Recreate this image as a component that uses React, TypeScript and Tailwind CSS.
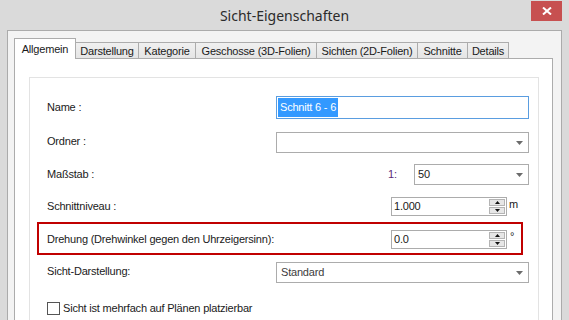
import React from 'react';

const tabs = [
  { label: 'Allgemein', w: 'w-[62px]' },
  { label: 'Darstellung', w: 'w-[64px]' },
  { label: 'Kategorie', w: 'w-[58px]' },
  { label: 'Geschosse (3D-Folien)', w: 'w-[122px]' },
  { label: 'Sichten (2D-Folien)', w: 'w-[102px]' },
  { label: 'Schnitte', w: 'w-[51px]' },
  { label: 'Details', w: 'w-[42px]' },
];

function ComboArrow() {
  return (
    <svg width="7" height="4" viewBox="0 0 7 4" className="shrink-0">
      <path d="M0 0h7L3.5 4z" fill="#6b6b6b" />
    </svg>
  );
}

function Combo({ value, width, textPad, textColor = 'text-[#1a1a1a]' }: { value: string; width: string; textPad: string; textColor?: string }) {
  return (
    <div className={`${width} h-[21px] border border-[#acacac] bg-white flex items-center pr-[5px] ${textPad}`}>
      <span className={`flex-1 ${textColor}`}>{value}</span>
      <ComboArrow />
    </div>
  );
}

function Spinner({ value }: { value: string }) {
  return (
    <div className="w-[116px] h-[19px] border border-[#acacac] bg-white flex shrink-0">
      <span className="flex-1 pl-[2px] leading-[17px]">{value}</span>
      <div className="flex flex-col gap-px p-px w-[18px]">
        <div className="h-[8px] border border-[#b4b4b4] bg-[#e6e6e6] flex items-center justify-center">
          <svg width="5" height="3" viewBox="0 0 5 3">
            <path d="M2.5 0L5 3H0z" fill="#111" />
          </svg>
        </div>
        <div className="h-[8px] border border-[#b4b4b4] bg-[#e6e6e6] flex items-center justify-center">
          <svg width="5" height="3" viewBox="0 0 5 3">
            <path d="M0 0h5L2.5 3z" fill="#111" />
          </svg>
        </div>
      </div>
    </div>
  );
}

export default function App() {
  return (
    <div className="w-[569px] h-[320px] overflow-hidden bg-[#dadada] flex flex-col font-['Liberation_Sans',Arial,sans-serif] text-[11px] tracking-[-0.2px] text-[#1a1a1a]">
      {/* title bar */}
      <div className="h-[30px] flex shrink-0">
        <div className="w-[38px]" />
        <div className="flex-1 text-center pt-[5px] font-['Noto_Sans',sans-serif] text-[14px] tracking-normal text-[#2b2b2b]">
          Sicht-Eigenschaften
        </div>
        <div className="w-[31px] h-[20px] mt-px bg-[#c75050] flex items-center justify-center">
          <svg width="10" height="8" viewBox="0 0 10 8">
            <path d="M1 0.5l8 7M9 0.5l-8 7" stroke="#fff" strokeWidth="2" />
          </svg>
        </div>
        <div className="w-[7px]" />
      </div>

      {/* client area */}
      <div className="flex-1 flex flex-col mx-[7px] border border-b-0 border-[#ababab] bg-[#f3f3f3] pt-[7px] pl-[6px] pr-[8px]">
        <div className="flex items-end h-[20px] shrink-0">
          {tabs.map((t, i) =>
            i === 0 ? (
              <div
                key={t.label}
                className={`${t.w} h-[21px] -mb-px relative z-10 border border-b-0 border-[#acacac] bg-white text-center pt-[2px]`}
              >
                {t.label}
              </div>
            ) : (
              <div
                key={t.label}
                className={`${t.w} h-[16px] -ml-px border border-b-0 border-[#acacac] bg-gradient-to-b from-[#f0f0f0] to-[#e5e5e5] text-center leading-[14px] pt-[1px]`}
              >
                {t.label}
              </div>
            )
          )}
        </div>

        <div className="flex-1 border border-b-0 border-[#acacac] bg-white pt-[18px] pl-[14px] pr-[13px] flex flex-col">
          <div className="flex-1 border border-b-0 border-[#e3e3e3] bg-white flex flex-col">
            {/* Name */}
            <div className="mt-[18px] h-[23px] flex items-center pl-[17px] pr-[9px]">
              <span className="flex-1">Name :</span>
              <div className="w-[253px] h-[23px] border border-[#5a9de0] bg-white flex items-center pl-px">
                <span className="bg-[#3399ff] text-white px-[2px] leading-[19px]">Schnitt 6 - 6</span>
              </div>
            </div>

            {/* Ordner */}
            <div className="mt-[13px] h-[21px] flex items-center pl-[17px] pr-[9px]">
              <span className="flex-1 -mt-[3px]">Ordner :</span>
              <Combo value="" width="w-[253px]" textPad="pl-[5px]" />
            </div>

            {/* Maßstab */}
            <div className="mt-[11px] h-[21px] flex items-center pl-[17px] pr-[9px]">
              <span className="flex-1 -mt-px">Maßstab :</span>
              <span className="w-[26px] text-[#5c2a78]">1:</span>
              <Combo value="50" width="w-[115px]" textPad="pl-[3px]" />
            </div>

            {/* Schnittniveau */}
            <div className="mt-[12px] h-[19px] flex items-center pl-[17px]">
              <span className="flex-1 -mt-px">Schnittniveau :</span>
              <Spinner value="1.000" />
              <span className="w-[31px] pl-[2px] self-start -mt-px">m</span>
            </div>

            {/* Drehung (marked) */}
            <div className="mt-[6px] ml-[7px] w-[486px] border-2 border-[#c00000] pl-[8px] pt-[6px] pb-[4px] flex items-center">
              <span className="flex-1 -mt-px">Drehung (Drehwinkel gegen den Uhrzeigersinn):</span>
              <Spinner value="0.0" />
              <span className="w-[14px] pl-[3px] self-start -mt-[2px]">°</span>
            </div>

            {/* Sicht-Darstellung */}
            <div className="mt-[7px] h-[21px] flex items-center pl-[17px] pr-[9px]">
              <span className="flex-1 -mt-[3px]">Sicht-Darstellung:</span>
              <Combo value="Standard" width="w-[253px]" textPad="pl-[4px]" textColor="text-[#3c3c3c]" />
            </div>

            {/* checkbox */}
            <div className="mt-[17px] flex items-center pl-[17px] gap-[3px]">
              <div className="w-[13px] h-[13px] border border-[#555555] bg-white" />
              <span>Sicht ist mehrfach auf Plänen platzierbar</span>
            </div>
          </div>
        </div>
      </div>
    </div>
  );
}
